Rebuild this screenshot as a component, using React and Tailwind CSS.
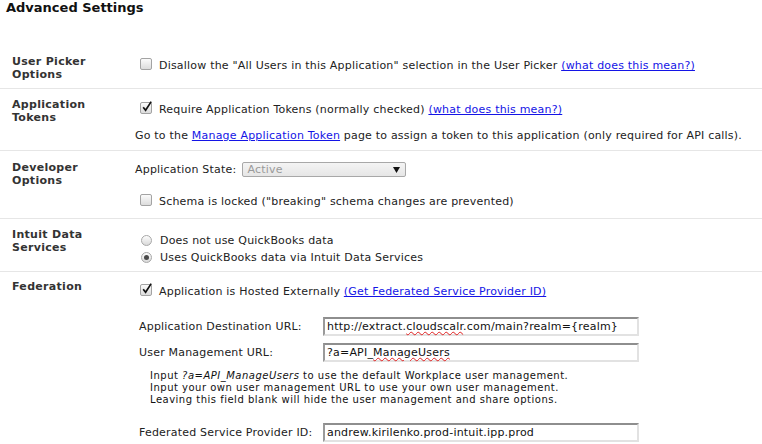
import React from "react";

const link = "text-[#1414e6] underline";

function Checkbox({ checked }) {
  return (
    <span className="relative inline-block w-[12px] h-[12px] rounded-[2px] border border-[#a3a3a3] bg-gradient-to-b from-[#fbfbfb] to-[#dcdcdc] shrink-0">
      {checked && (
        <svg className="absolute left-[0px] top-[-3px]" width="12" height="13" viewBox="0 0 12 13">
          <path d="M2.2 7.2 L4.6 10.2 L10.2 1.6" fill="none" stroke="#111" strokeWidth="1.7" />
        </svg>
      )}
    </span>
  );
}

function Radio({ checked }) {
  return (
    <span className="flex items-center justify-center w-[11px] h-[11px] rounded-full border border-[#a8a8a8] bg-gradient-to-b from-[#fdfdfd] to-[#d9d9d9] shrink-0">
      {checked && <span className="w-[5px] h-[5px] rounded-full bg-[#4a4a4a]" />}
    </span>
  );
}

function Row({ label, className, children }) {
  return (
    <div className={`grid grid-cols-[135px_1fr] border-b border-[#e6e6e6] ${className}`}>
      <div className="pl-[12px] font-bold text-[#333] leading-[13px] tracking-[0.3px]">{label}</div>
      <div>{children}</div>
    </div>
  );
}

function Field({ label, className, children }) {
  return (
    <div className={`grid grid-cols-[184px_316px] items-center pl-[4px] ${className}`}>
      <span>{label}</span>
      <div className="h-[19px] border-2 border-t-[#8e8e8e] border-l-[#9a9a9a] border-r-[#e2e2e2] border-b-[#e2e2e2] bg-white pl-[2px] text-[11px] leading-[15px] text-[#111] whitespace-nowrap">
        {children}
      </div>
    </div>
  );
}

const wavy = "underline decoration-wavy decoration-[#e02020] decoration-1 underline-offset-[1px]";

export default function App() {
  return (
    <div className="w-[762px] h-[444px] overflow-hidden bg-white text-[#222] text-[11px] leading-[13px] tracking-[0.2px] font-['DejaVu_Sans',Verdana,sans-serif]">
      <h2 className="pl-[6px] text-[13px] leading-[16px] font-bold text-[#111] tracking-normal">Advanced Settings</h2>

      <div className="mt-[30px]">
        <Row label={<>User Picker<br />Options</>} className="pt-[9px] pb-[7px]">
          <div className="pt-[4px] flex items-center h-[17px]">
            <span className="ml-[5px] mr-[7px]"><Checkbox /></span>
            <span>
              Disallow the "All Users in this Application" selection in the User Picker{" "}
              <a className={link}>(what does this mean?)</a>
            </span>
          </div>
        </Row>

        <Row label={<>Application<br />Tokens</>} className="pt-[9px] pb-[8px]">
          <div className="mt-[5px] flex items-center h-[13px]">
            <span className="ml-[5px] mr-[7px]"><Checkbox checked /></span>
            <span>
              Require Application Tokens (normally checked){" "}
              <a className={link}>(what does this mean?)</a>
            </span>
          </div>
          <p className="mt-[13px] whitespace-nowrap">
            Go to the <a className={link}>Manage Application Token</a> page to assign a token to this application (only required for API calls).
          </p>
        </Row>

        <Row label={<>Developer<br />Options</>} className="pt-[10px] pb-[10px]">
          <div className="mt-[1px] flex items-center h-[15px] gap-[6px]">
            <span>Application State:</span>
            <div className="w-[164px] h-[15px] flex items-center justify-between rounded-[2px] border border-[#a8a8a8] bg-gradient-to-b from-[#f4f4f4] to-[#e6e6e6] pl-[4px] pr-[5px]">
              <span className="text-[#9a9a9a]">Active</span>
              <svg width="7" height="6" viewBox="0 0 7 6"><path d="M0 0 H7 L3.5 6 Z" fill="#111" /></svg>
            </div>
          </div>
          <div className="mt-[18px] flex items-center h-[13px]">
            <span className="ml-[5px] mr-[7px]"><Checkbox /></span>
            <span>Schema is locked ("breaking" schema changes are prevented)</span>
          </div>
        </Row>

        <Row label={<>Intuit Data<br />Services</>} className="pt-[9px] pb-[7px]">
          <div className="mt-[6px] flex flex-col gap-[4px]">
            <div className="flex items-center h-[13px]">
              <span className="ml-[6px] mr-[8px]"><Radio /></span>
              <span>Does not use QuickBooks data</span>
            </div>
            <div className="flex items-center h-[13px]">
              <span className="ml-[6px] mr-[8px]"><Radio checked /></span>
              <span>Uses QuickBooks data via Intuit Data Services</span>
            </div>
          </div>
        </Row>

        <Row label="Federation" className="pt-[8px] border-b-0">
          <div className="mt-[5px] flex items-center h-[13px]">
            <span className="ml-[5px] mr-[7px]"><Checkbox checked /></span>
            <span>
              Application is Hosted Externally <a className={link}>(Get Federated Service Provider ID)</a>
            </span>
          </div>
          <Field label="Application Destination URL:" className="mt-[19px]">
            http://extract.<span className={wavy}>cloudscalr</span>.com/main?realm={"{realm}"}
          </Field>
          <Field label="User Management URL:" className="mt-[7px]">
            ?a=API_<span className={wavy}>ManageUsers</span>
          </Field>
          <div className="mt-[8px] pl-[15px] text-[10px] leading-[12px] tracking-[0.5px] text-[#111]">
            <p>Input <i>?a=API_ManageUsers</i> to use the default Workplace user management.</p>
            <p>Input your own user management URL to use your own user management.</p>
            <p>Leaving this field blank will hide the user management and share options.</p>
          </div>
          <Field label="Federated Service Provider ID:" className="mt-[17px]">
            andrew.kirilenko.prod-intuit.ipp.prod
          </Field>
        </Row>
      </div>
    </div>
  );
}
